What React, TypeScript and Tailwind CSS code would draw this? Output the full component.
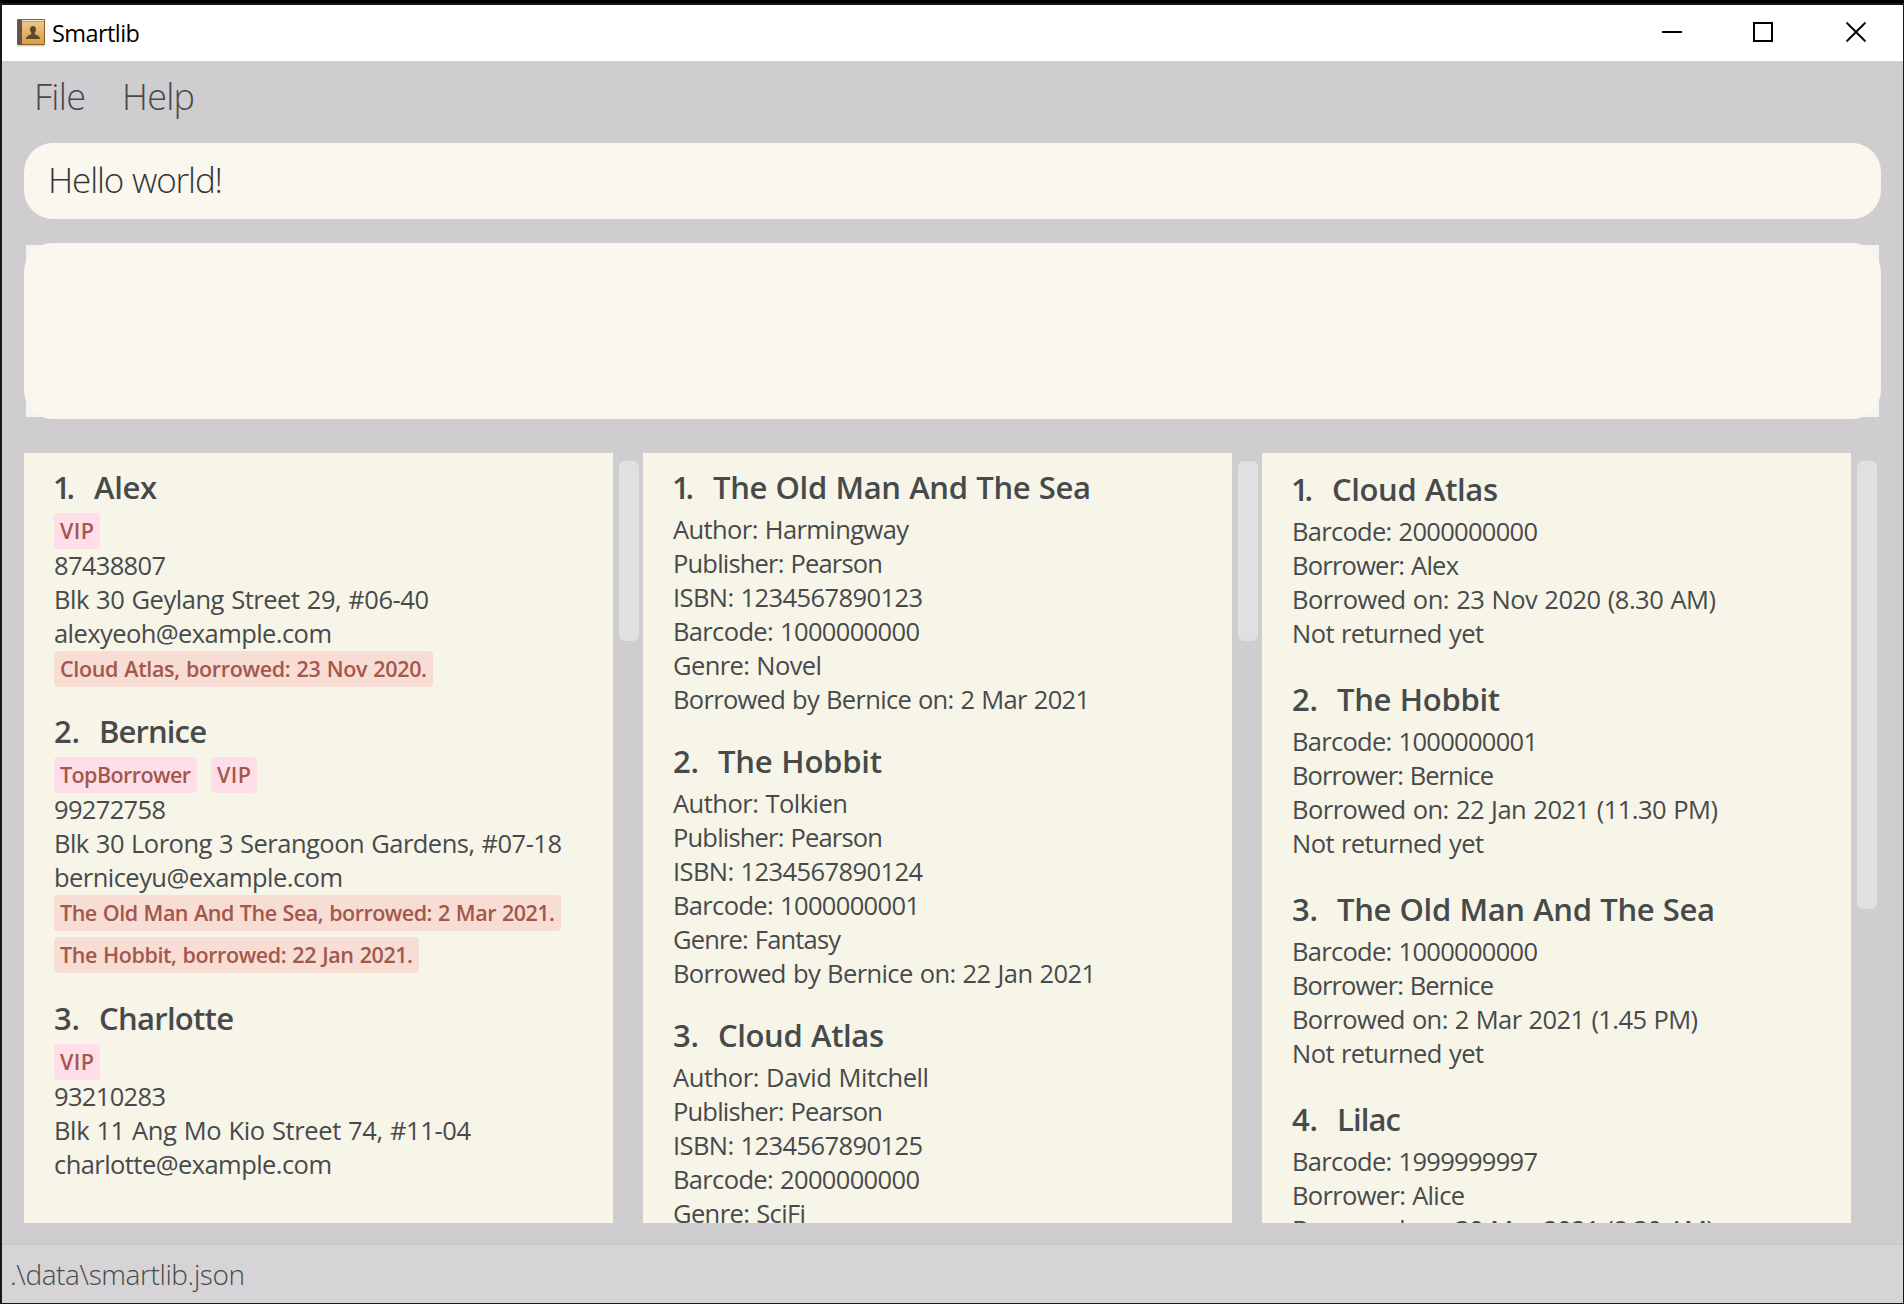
import { useLayoutEffect, useRef } from "react";

// Text whose tracking is adjusted so that it fills the given width.
function Fit({ text, w, className = "" }: { text: string; w: number; className?: string }) {
  const ref = useRef<HTMLSpanElement>(null);
  useLayoutEffect(() => {
    const el = ref.current;
    if (!el) return;
    el.style.letterSpacing = "0px";
    const natural = el.getBoundingClientRect().width;
    el.style.letterSpacing = `${(w - natural) / Math.max(1, text.length - 1)}px`;
  }, [text, w]);
  return (
    <span className={`block ${className}`}>
      <span ref={ref} className="whitespace-pre [word-spacing:1px]">{text}</span>
    </span>
  );
}

type Item = [string, number];
type Card = {
  index: string;
  indexWidth: number;
  title: Item;
  tags?: Item[];
  lines: Item[];
  loans?: Item[];
};

const readers: Card[] = [
  {
    index: "1.", indexWidth: 40, title: ["Alex", 63], tags: [["VIP", 34]],
    lines: [["87438807", 112], ["Blk 30 Geylang Street 29, #06-40", 375], ["alexyeoh@example.com", 278]],
    loans: [["Cloud Atlas, borrowed: 23 Nov 2020.", 367]],
  },
  {
    index: "2.", indexWidth: 45, title: ["Bernice", 108], tags: [["TopBorrower", 131], ["VIP", 34]],
    lines: [["99272758", 112], ["Blk 30 Lorong 3 Serangoon Gardens, #07-18", 508], ["berniceyu@example.com", 289]],
    loans: [["The Old Man And The Sea, borrowed: 2 Mar 2021.", 495], ["The Hobbit, borrowed: 22 Jan 2021.", 353]],
  },
  {
    index: "3.", indexWidth: 45, title: ["Charlotte", 135], tags: [["VIP", 34]],
    lines: [["93210283", 112], ["Blk 11 Ang Mo Kio Street 74, #11-04", 417], ["charlotte@example.com", 278]],
  },
];

const books: Card[] = [
  {
    index: "1.", indexWidth: 40, title: ["The Old Man And The Sea", 378],
    lines: [["Author: Harmingway", 236], ["Publisher: Pearson", 210], ["ISBN: 1234567890123", 250], ["Barcode: 1000000000", 247], ["Genre: Novel", 149], ["Borrowed by Bernice on: 2 Mar 2021", 417]],
  },
  {
    index: "2.", indexWidth: 45, title: ["The Hobbit", 164],
    lines: [["Author: Tolkien", 175], ["Publisher: Pearson", 210], ["ISBN: 1234567890124", 250], ["Barcode: 1000000001", 247], ["Genre: Fantasy", 168], ["Borrowed by Bernice on: 22 Jan 2021", 423]],
  },
  {
    index: "3.", indexWidth: 45, title: ["Cloud Atlas", 166],
    lines: [["Author: David Mitchell", 256], ["Publisher: Pearson", 210], ["ISBN: 1234567890125", 250], ["Barcode: 2000000000", 247], ["Genre: SciFi", 133]],
  },
];

const records: Card[] = [
  {
    index: "1.", indexWidth: 40, title: ["Cloud Atlas", 166],
    lines: [["Barcode: 2000000000", 246], ["Borrower: Alex", 167], ["Borrowed on: 23 Nov 2020 (8.30 AM)", 424], ["Not returned yet", 192]],
  },
  {
    index: "2.", indexWidth: 45, title: ["The Hobbit", 163],
    lines: [["Barcode: 1000000001", 246], ["Borrower: Bernice", 202], ["Borrowed on: 22 Jan 2021 (11.30 PM)", 426], ["Not returned yet", 192]],
  },
  {
    index: "3.", indexWidth: 45, title: ["The Old Man And The Sea", 378],
    lines: [["Barcode: 1000000000", 246], ["Borrower: Bernice", 202], ["Borrowed on: 2 Mar 2021 (1.45 PM)", 406], ["Not returned yet", 192]],
  },
  {
    index: "4.", indexWidth: 45, title: ["Lilac", 64],
    lines: [["Barcode: 1999999997", 246], ["Borrower: Alice", 173], ["Borrowed on: 30 Mar 2021 (8.30 AM)", 422]],
  },
];

function Chips({ items, className }: { items: Item[]; className: string }) {
  return (
    <>
      {items.map(([text, w]) => (
        <span key={text} className={`h-9 rounded px-1.5 text-[21.5px] leading-[35px] font-semibold text-[#a4574c] ${className}`}>
          <span className="block" style={{ width: w }}>
            <Fit text={text} w={w} />
          </span>
        </span>
      ))}
    </>
  );
}

function CardView({ card, className }: { card: Card; className: string }) {
  return (
    <div className={className}>
      <div className="flex h-[60px] pt-2.5 text-[31px] leading-[48px] font-semibold">
        <span className="shrink-0" style={{ width: card.indexWidth }}>
          <Fit text={card.index} w={card.index === "1." ? 22 : 26} className={card.index === "1." ? "-ml-px" : ""} />
        </span>
        <Fit text={card.title[0]} w={card.title[1]} />
      </div>
      {card.tags && (
        <div className="flex gap-3.5">
          <Chips items={card.tags} className="bg-[#ffdee9]" />
        </div>
      )}
      {card.lines.map(([text, w]) => (
        <Fit key={text} text={text} w={w} className="h-[34px] text-[25.5px] leading-8" />
      ))}
      {card.loans && (
        <div className="flex flex-col items-start gap-1.5">
          <Chips items={card.loans} className="bg-[#f7ddd4]" />
        </div>
      )}
    </div>
  );
}

function Panel({ cards, cardClass, panelClass, thumbClass }: { cards: Card[]; cardClass: string; panelClass: string; thumbClass: string }) {
  return (
    <div className="flex h-full w-[619px] shrink-0">
      <div className={`h-full w-[589px] overflow-hidden bg-[#f7f5e8] pl-[30px] ${panelClass}`}>
        {cards.map((c) => (
          <CardView key={c.index} card={c} className={cardClass} />
        ))}
      </div>
      <div className={`mt-2 ml-1.5 w-5 rounded-md bg-[#e0e0e2] ${thumbClass}`} />
    </div>
  );
}

function BookIcon() {
  return (
    <svg width="28" height="28" viewBox="0 0 28 28">
      <defs>
        <linearGradient id="cover" x1="0" y1="0" x2="0" y2="1">
          <stop offset="0" stopColor="#e6c68c" />
          <stop offset="1" stopColor="#d9a044" />
        </linearGradient>
      </defs>
      <rect x="0.5" y="26" width="27" height="1.5" fill="#d4d4d4" />
      <rect x="0" y="0" width="28" height="26" rx="1" fill="#8a5a1e" />
      <rect x="5" y="1" width="22" height="1.5" fill="#f6ead2" />
      <rect x="5" y="3" width="22" height="22" fill="url(#cover)" />
      <rect x="0.5" y="1" width="4.5" height="24.5" fill="#64524e" />
      <path d="M16 7c-2 0-3 1.400-3 3.200 0 1.700.7 2.800 1.300 3.600v1.400c-1.500.8-5.300 1.300-5.300 4.800h14c0-3.500-3.800-4-5.300-4.800v-1.400c.6-.8 1.300-1.900 1.300-3.600C19 8.400 18 7 16 7z" fill="#5f4827" />
    </svg>
  );
}

export default function App() {
  return (
    <div className="flex h-[1304px] w-[1904px] flex-col overflow-hidden border-t-3 border-black bg-[#d0cdd1] font-['Open_Sans','Noto_Sans',sans-serif] text-[#474a4b]">
      <div className="flex h-[1301px] flex-col border-t-2 border-r border-b border-l-2 border-[#18171a]">
        <header className="flex h-14 shrink-0 items-center bg-white text-black">
          <div className="ml-[15px]"><BookIcon /></div>
          <Fit text="Smartlib" w={88} className="ml-[7px] -mt-px text-[23.5px] leading-8" />
          <svg className="mr-px ml-auto" width="240" height="56" viewBox="0 0 240 56">
            <path d="M0 27h20" stroke="#000" strokeWidth="2" />
            <rect x="92" y="18" width="18" height="18" fill="none" stroke="#000" strokeWidth="2" />
            <path d="M184.500 17.500l19 19M203.500 17.500l-19 19" stroke="#000" strokeWidth="1.800" />
          </svg>
        </header>

        <nav className="flex h-[82px] shrink-0 pt-3 text-[36px] leading-[48px] font-light">
          <Fit text="File" w={52} className="ml-8 w-[88px]" />
          <Fit text="Help" w={73} />
        </nav>

        <div className="mx-[22px] h-[76px] w-[1857px] shrink-0 rounded-[29px] bg-[#faf7ef] pl-6 text-[35px] leading-[74px] font-light text-[#333638]">
          <Fit text="Hello world!" w={175} />
        </div>

        <div className="mx-[22px] mt-6 grid h-44 w-[1857px] shrink-0">
          <div className="col-start-1 row-start-1 m-0.5 bg-[#f3f3f4]" />
          <div className="col-start-1 row-start-1 rounded-[29px] bg-[#faf7ef]" />
        </div>

        <main className="mt-3 flex h-[814px] shrink-0 border-y-2 border-[#cac8cb] px-[22px] py-5">
          <Panel cards={readers} cardClass="mb-2.5 nth-2:mb-[11px]" panelClass="" thumbClass="h-[180px]" />
          <Panel cards={books} cardClass="mb-2.5" panelClass="" thumbClass="h-[180px]" />
          <Panel cards={records} cardClass="mb-3.5" panelClass="pt-0.5" thumbClass="h-[448px]" />
        </main>

        <footer className="grow bg-[#d6d4d7] pl-2 text-[28px] leading-[58px] font-light">
          <Fit text=".\data\smartlib.json" w={235} />
        </footer>
      </div>
    </div>
  );
}
